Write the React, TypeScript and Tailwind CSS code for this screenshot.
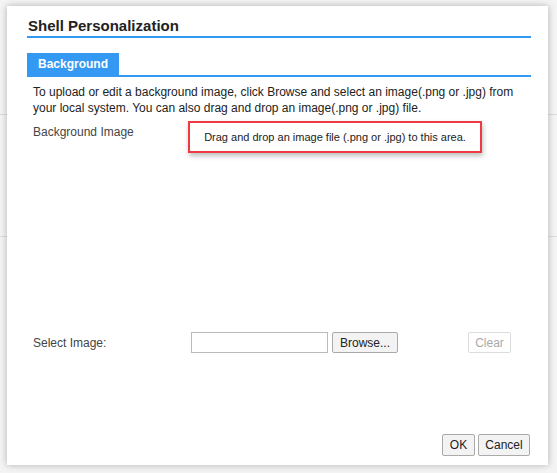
export default function App() {
  return (
    <div className="relative h-[473px] w-[557px] overflow-hidden bg-[#f4f4f4] font-['Liberation_Sans',Arial,sans-serif]">
      {/* page behind the dialog */}
      <div className="absolute left-0 top-[114px] h-px w-full bg-[#dcdcdc]" />
      <div className="absolute left-0 top-[236px] h-px w-full bg-[#dcdcdc]" />

      {/* DIALOG */}
      <div className="relative ml-[7px] mt-[6px] flex h-[459px] w-[541px] flex-col bg-white pl-[20px] pr-[17px] shadow-[0_0_7px_rgba(0,0,0,0.28)]">
        <div className="border-b-2 border-[#3399f3] pt-[10px]">
          <h1 className="pl-px text-[15px] font-bold leading-[20px] text-[#222]">Shell Personalization</h1>
        </div>

        <div className="mt-[15px] flex border-b-2 border-[#3399f3]">
          <div className="flex h-[22px] w-[92px] items-center justify-center bg-[#3399f3] text-[12px] font-bold text-white">
            Background
          </div>
        </div>

        <p className="mt-[7px] pl-[6px] text-[12px] leading-[16px] text-[#222]">
          To upload or edit a background image, click Browse and select an image(.png or .jpg) from your local system. You can also drag and drop an image(.png or .jpg) file.
        </p>

        <div className="mt-[5px] flex h-[211px] pl-[6px]">
          <div className="w-[155px] pt-[3px] text-[12px] leading-[16px] text-[#444]">Background Image</div>
          <div className="flex h-[32px] w-[294px] items-center justify-center border-2 border-[#ee3b43] bg-white text-[11px] text-[#222] shadow-[1px_3px_5px_rgba(0,0,0,0.25)]">
            Drag and drop an image file (.png or .jpg) to this area.
          </div>
        </div>

        <div className="flex h-[21px] items-center pl-[6px]">
          <div className="w-[158px] text-[12px] text-[#444]">Select Image:</div>
          <input className="h-[21px] w-[137px] border border-[#bbbbbb] bg-white outline-none" />
          <button className="ml-[4px] h-[21px] w-[66px] rounded-[2px] border border-[#aaaaaa] bg-[#f3f3f3] text-[12px] text-[#222]">
            Browse...
          </button>
          <button className="ml-[70px] h-[21px] w-[43px] rounded-[2px] border border-[#dddddd] bg-white text-[12px] text-[#aaaaaa]">
            Clear
          </button>
        </div>

        <div className="mt-auto mb-[9px] flex justify-end gap-[3px]">
          <button className="h-[22px] w-[33px] rounded-[2px] border border-[#aaaaaa] bg-[#f3f3f3] text-[12px] text-[#222]">
            OK
          </button>
          <button className="mr-px h-[22px] w-[52px] rounded-[2px] border border-[#aaaaaa] bg-[#f3f3f3] text-[12px] text-[#222]">
            Cancel
          </button>
        </div>
      </div>
    </div>
  );
}
